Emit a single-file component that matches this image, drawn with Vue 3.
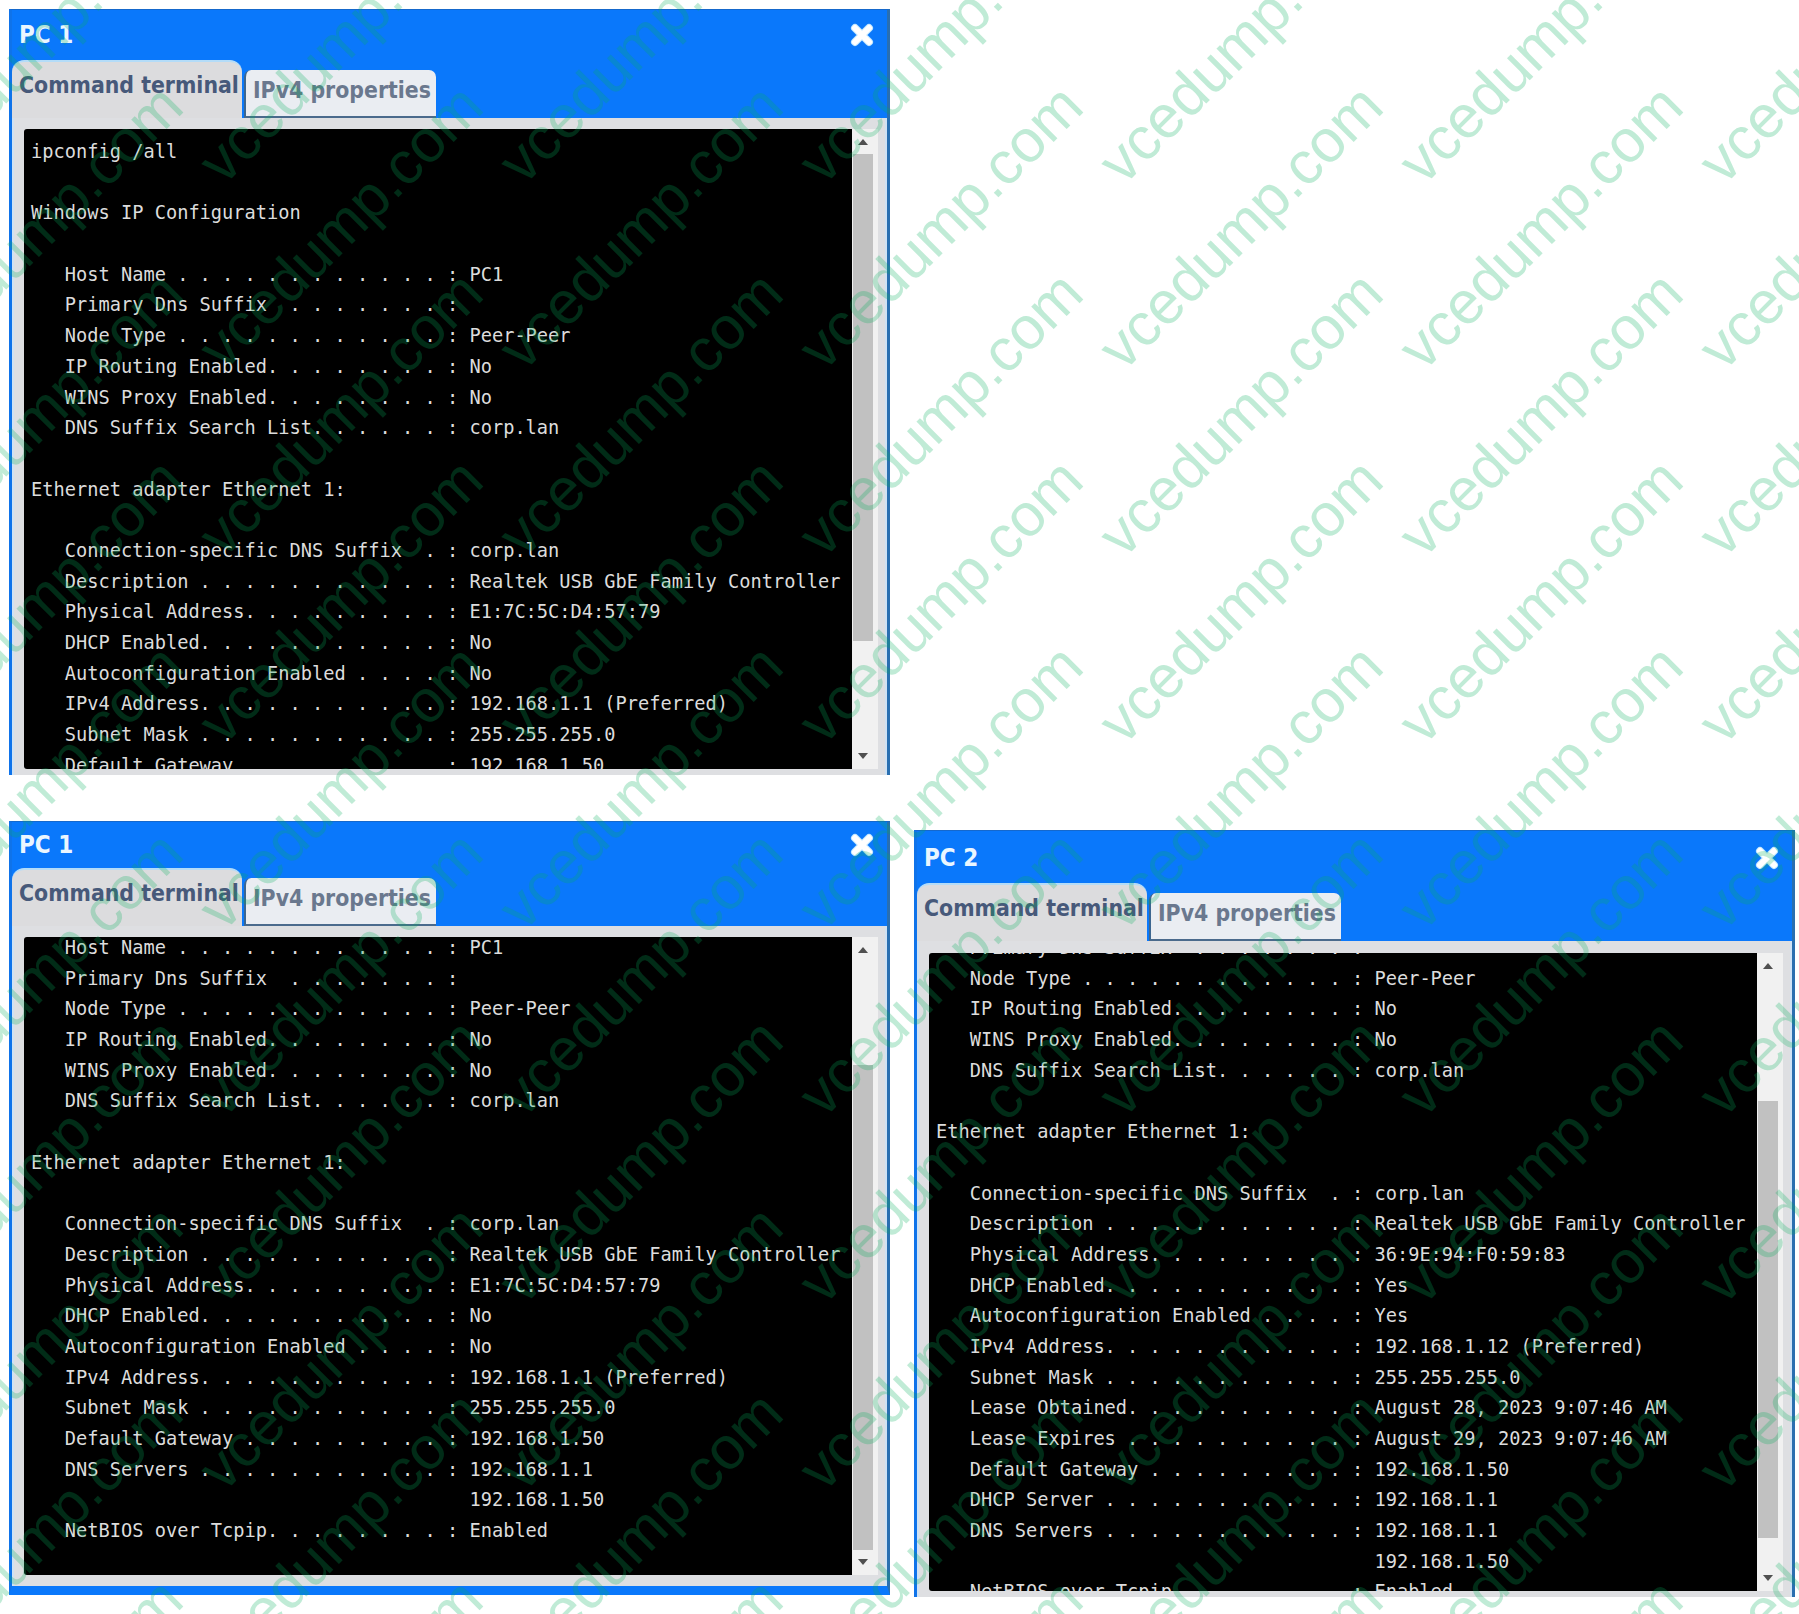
<script setup>
const common1 = `   Host Name . . . . . . . . . . . . : PC1
   Primary Dns Suffix  . . . . . . . : 
   Node Type . . . . . . . . . . . . : Peer-Peer
   IP Routing Enabled. . . . . . . . : No
   WINS Proxy Enabled. . . . . . . . : No
   DNS Suffix Search List. . . . . . : corp.lan

Ethernet adapter Ethernet 1:

   Connection-specific DNS Suffix  . : corp.lan
   Description . . . . . . . . . . . : Realtek USB GbE Family Controller
   Physical Address. . . . . . . . . : E1:7C:5C:D4:57:79
   DHCP Enabled. . . . . . . . . . . : No
   Autoconfiguration Enabled . . . . : No
   IPv4 Address. . . . . . . . . . . : 192.168.1.1 (Preferred)
   Subnet Mask . . . . . . . . . . . : 255.255.255.0
   Default Gateway . . . . . . . . . : 192.168.1.50`

const tail1 = `
   DNS Servers . . . . . . . . . . . : 192.168.1.1
                                       192.168.1.50
   NetBIOS over Tcpip. . . . . . . . : Enabled`

const pc2 = `   Primary Dns Suffix  . . . . . . . : 
   Node Type . . . . . . . . . . . . : Peer-Peer
   IP Routing Enabled. . . . . . . . : No
   WINS Proxy Enabled. . . . . . . . : No
   DNS Suffix Search List. . . . . . : corp.lan

Ethernet adapter Ethernet 1:

   Connection-specific DNS Suffix  . : corp.lan
   Description . . . . . . . . . . . : Realtek USB GbE Family Controller
   Physical Address. . . . . . . . . : 36:9E:94:F0:59:83
   DHCP Enabled. . . . . . . . . . . : Yes
   Autoconfiguration Enabled . . . . : Yes
   IPv4 Address. . . . . . . . . . . : 192.168.1.12 (Preferred)
   Subnet Mask . . . . . . . . . . . : 255.255.255.0
   Lease Obtained. . . . . . . . . . : August 28, 2023 9:07:46 AM
   Lease Expires . . . . . . . . . . : August 29, 2023 9:07:46 AM
   Default Gateway . . . . . . . . . : 192.168.1.50
   DHCP Server . . . . . . . . . . . : 192.168.1.1
   DNS Servers . . . . . . . . . . . : 192.168.1.1
                                       192.168.1.50
   NetBIOS over Tcpip. . . . . . . . : Enabled`

const windows = [
  { id: 'w1', title: 'PC 1', text: 'ipconfig /all\n\nWindows IP Configuration\n\n' + common1 },
  { id: 'w2', title: 'PC 1', text: common1 + tail1 },
  { id: 'w3', title: 'PC 2', text: pc2 }
]

const marks = []
for (let i = -3; i <= 3; i++) {
  for (let j = -1; j <= 9; j++) {
    marks.push({ key: i + '_' + j, left: 823.5 + 300 * i, top: 186.6 + 186.7 * j })
  }
}
</script>

<template>
  <div class="canvas">
    <section v-for="w in windows" :key="w.id" class="window" :class="w.id">
      <header class="head">
        <div class="title-row">
          <span class="title">{{ w.title }}</span>
          <svg class="close" width="26" height="26" viewBox="0 0 26 26" aria-hidden="true">
            <path d="M6 6 L20 20 M20 6 L6 20" stroke="#bfe6ff" stroke-width="8" stroke-linecap="round" fill="none" />
            <path d="M6 6 L20 20 M20 6 L6 20" stroke="#ffffff" stroke-width="6" stroke-linecap="round" fill="none" />
          </svg>
        </div>
        <div class="tabs">
          <div class="tab active">Command terminal</div>
          <div class="tab">IPv4 properties</div>
        </div>
      </header>
      <div class="content">
        <div class="terminal">
          <pre class="lines">{{ w.text }}</pre>
        </div>
        <div class="scrollbar">
          <span class="arrow up"></span>
          <div class="track"><div class="thumb"></div></div>
          <span class="arrow down"></span>
        </div>
      </div>
    </section>
    <div class="marks" aria-hidden="true">
      <span v-for="m in marks" :key="m.key" class="mark" :style="{ left: m.left + 'px', top: m.top + 'px' }">vcedump.com</span>
    </div>
  </div>
</template>

<style>
html, body { margin: 0; background: #fff; }
</style>

<style scoped>
.canvas {
  position: relative;
  width: 1799px;
  height: 1614px;
  overflow: hidden;
  background: #fff;
}
.window {
  position: absolute;
  width: 881px;
  box-sizing: border-box;
  display: flex;
  flex-direction: column;
  background: #0a78fb;
  border-top: 1px solid #1568cc;
  border-left: 3px solid #0f73ea;
  border-right: 3px solid #2a6fb0;
}
.w1 { left: 9px; top: 9px; height: 766px; }
.w2 { left: 9px; top: 821px; height: 774px; border-bottom: 9px solid #0a78fb; }
.w3 { left: 914px; top: 830px; height: 767px; }

.head {
  display: flex;
  flex-direction: column;
  height: 108px;
  flex: none;
  box-sizing: border-box;
}
.w2 .head { height: 104px; }
.w3 .head { height: 110px; }

.title-row {
  display: flex;
  justify-content: space-between;
  align-items: center;
  height: 50px;
  padding: 0 12px 0 7px;
  flex: none;
}
.w2 .title-row { height: 45px; }
.w3 .title-row { height: 54px; }

.title {
  font-family: "DejaVu Sans", sans-serif;
  font-stretch: condensed;
  font-weight: 700;
  font-size: 24px;
  color: #eaf6ff;
}
.close { display: block; }

.tabs {
  display: flex;
  align-items: flex-end;
  flex: 1;
  min-height: 0;
  gap: 2px;
}
.tab {
  font-family: "DejaVu Sans", sans-serif;
  font-stretch: condensed;
  font-weight: 700;
  font-size: 22.8px;
  white-space: nowrap;
  box-sizing: border-box;
  height: 48px;
  width: 192px;
  padding: 7px 0 0 7px;
  background: #eaedf2;
  color: #6a788e;
  border-radius: 7px 7px 0 0;
  border-left: 2px solid #3c6690;
  border-bottom: 2px solid #4a6a8c;
}
.tab.active {
  width: 230px;
  height: 58px;
  padding: 10px 0 0 7px;
  background: #dcdcde;
  color: #47597a;
  border: 0;
  border-top: 2px solid #b4dcf8;
  border-radius: 12px 12px 0 0;
}

.content {
  flex: 1;
  min-height: 0;
  display: flex;
  box-sizing: border-box;
  background: #dedfe2;
  border-left: 2px solid #cfe2f4;
  border-right: 2px solid #cfe2f4;
  padding: 11px 7px 6px 10px;
}
.w2 .content { padding-bottom: 11px; padding-top: 11px; }
.w3 .content { padding-top: 12px; padding-bottom: 6px; }

.terminal {
  flex: 1;
  min-width: 0;
  background: #000;
  overflow: hidden;
  border-radius: 3px 0 0 3px;
  padding-left: 7px;
}
.lines {
  margin: 0;
  font-family: "DejaVu Sans Mono", monospace;
  font-size: 18.68px;
  line-height: 30.69px;
  color: #dcdcdc;
}
.w1 .lines { margin-top: 8px; }
.w2 .lines { margin-top: -4px; }
.w3 .lines { margin-top: -20px; }

.scrollbar {
  flex: none;
  width: 26px;
  box-sizing: border-box;
  padding: 0 5px 0 1px;
  background: #f1f1f1;
  display: flex;
  flex-direction: column;
  align-items: center;
}
.arrow {
  flex: none;
  width: 0;
  height: 0;
  border-left: 5px solid transparent;
  border-right: 5px solid transparent;
}
.arrow.up { border-bottom: 6px solid #505050; margin: 10px 0 9px; }
.arrow.down { border-top: 6px solid #505050; margin: 9px 0 10px; }
.track { flex: 1; width: 100%; box-sizing: border-box; display: flex; min-height: 0; }
.thumb { width: 100%; background: #c1c1c1; }
.w1 .thumb { height: 487px; }
.w2 .track { align-items: flex-end; }
.w2 .thumb { height: 485px; }
.w3 .track { align-items: flex-end; padding-bottom: 28px; }
.w3 .thumb { height: 437px; }

.marks {
  position: absolute;
  inset: 0;
  pointer-events: none;
}
.mark {
  position: absolute;
  font-family: "Liberation Sans", sans-serif;
  font-size: 60px;
  letter-spacing: -0.2px;
  line-height: 60px;
  white-space: nowrap;
  color: rgba(4, 176, 92, 0.25);
  transform-origin: 0 50.8px;
  transform: translateY(-50.8px) rotate(-45deg);
}
</style>
